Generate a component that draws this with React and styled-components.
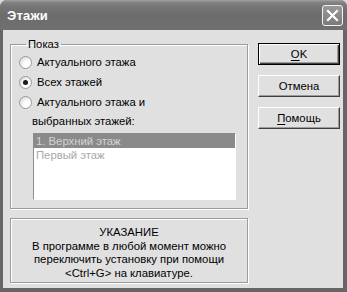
import React from 'react';
import styled, {createGlobalStyle} from 'styled-components';

const GlobalStyle = createGlobalStyle`
    html, body {
        margin: 0;
        padding: 0;
        background: #d9d9d9;
    }
    body {
        font-family: "Liberation Sans", Arial, sans-serif;
        font-size: 11.3px;
        color: #000;
    }
`;

const Window = styled.div`
    width: 347px;
    height: 292px;
    display: flex;
    flex-direction: column;
    background: #666;
    border-radius: 7px 7px 0 0;
    overflow: hidden;
`;

const TitleBar = styled.div`
    height: 30px;
    flex: none;
    display: flex;
    align-items: center;
    justify-content: space-between;
    padding: 0 4px 0 7px;
    box-sizing: border-box;
    background: linear-gradient(#a4a4a4 0, #858585 2px, #767676 6px, #6c6c6c 50%, #707070 100%);
`;

const Title = styled.span`
    color: #fff;
    font-weight: bold;
    font-size: 13px;
    letter-spacing: 0.2px;
`;

const CloseButton = styled.div`
    width: 21px;
    height: 21px;
    box-sizing: border-box;
    border: 1px solid #f2f2f2;
    border-radius: 3px;
    background: linear-gradient(#9a9a9a, #7a7a7a);
    display: flex;
    align-items: center;
    justify-content: center;
`;

const Client = styled.div`
    flex: 1;
    margin: 0 4px 4px 3px;
    background: #e0e0e0;
    display: flex;
    gap: 10px;
    padding: 7px 3px 5px 7px;
    box-sizing: border-box;
`;

const LeftCol = styled.div`
    width: 239px;
    display: flex;
    flex-direction: column;
    gap: 9px;
`;

const Group = styled.fieldset`
    margin: 0;
    height: 172px;
    box-sizing: border-box;
    padding: 1px 0 0 8px;
    border: 1px solid #9c9c9c;
    box-shadow: inset 1px 1px #fff, 1px 1px #fff;
`;

const Legend = styled.legend`
    margin-left: 7px;
    padding: 0 2px;
    line-height: 14px;
`;

const RadioRow = styled.div`
    display: flex;
    align-items: center;
    height: 20px;
    gap: 5px;
`;

const Radio = styled.span`
    width: 13px;
    height: 13px;
    box-sizing: border-box;
    border-radius: 50%;
    border: 1px solid #9a9a9a;
    background: radial-gradient(circle at 70% 70%, #fff 30%, #e4e4e4 70%, #cfcfcf 100%);
    display: flex;
    align-items: center;
    justify-content: center;
    &::after {
        content: '';
        width: 5px;
        height: 5px;
        border-radius: 50%;
        background: ${p => (p.$checked ? '#1a1a1a' : 'transparent')};
    }
`;

const WrapLine = styled.div`
    padding-left: 13px;
    line-height: 16px;
    margin-top: 1px;
`;

const ListBox = styled.div`
    margin: 4px 0 0 14px;
    width: 203px;
    height: 67px;
    box-sizing: border-box;
    background: #fff;
    border: 1px solid;
    border-color: #8c8c8c #fff #fff #8c8c8c;
`;

const ListItem = styled.div`
    height: 14px;
    line-height: 14px;
    padding-left: 2px;
    background: ${p => (p.$selected ? '#8a8a8a' : 'transparent')};
    color: ${p => (p.$selected ? '#d4d4d4' : '#a8a8a8')};
`;

const Hint = styled.div`
    height: 65px;
    box-sizing: border-box;
    border: 1px solid #9c9c9c;
    box-shadow: inset 1px 1px #fff, 1px 1px #fff;
    text-align: center;
    line-height: 13.5px;
    padding-top: 7px;
`;

const RightCol = styled.div`
    display: flex;
    flex-direction: column;
    gap: 10px;
    padding-top: 6px;
`;

const Button = styled.div`
    width: 82px;
    height: 22px;
    box-sizing: border-box;
    display: flex;
    align-items: center;
    justify-content: center;
    background: #e0e0e0;
    border: 1px solid;
    border-color: ${p => (p.$default ? '#000' : '#fff #404040 #404040 #fff')};
    box-shadow: ${p => (p.$default
        ? 'inset 1px 1px #fff, inset -1px -1px #404040, inset -2px -2px #9c9c9c'
        : 'inset -1px -1px #9c9c9c')};
    & u {
        text-decoration: underline;
        text-underline-offset: 2px;
    }
`;

function App() {
    return (
        <>
            <GlobalStyle />
            <Window>
                <TitleBar>
                    <Title>Этажи</Title>
                    <CloseButton>
                        <svg width="13" height="13" viewBox="0 0 13 13">
                            <path d="M2 2 L11 11 M11 2 L2 11" stroke="#fff" strokeWidth="2.2" strokeLinecap="square" />
                        </svg>
                    </CloseButton>
                </TitleBar>
                <Client>
                    <LeftCol>
                        <Group>
                            <Legend>Показ</Legend>
                            <RadioRow><Radio />Актуального этажа</RadioRow>
                            <RadioRow><Radio $checked />Всех этажей</RadioRow>
                            <RadioRow><Radio />Актуального этажа и</RadioRow>
                            <WrapLine>выбранных этажей:</WrapLine>
                            <ListBox>
                                <ListItem $selected>1. Верхний этаж</ListItem>
                                <ListItem>Первый этаж</ListItem>
                            </ListBox>
                        </Group>
                        <Hint>
                            УКАЗАНИЕ<br />
                            В программе в любой момент можно<br />
                            переключить установку при помощи<br />
                            &lt;Ctrl+G&gt; на клавиатуре.
                        </Hint>
                    </LeftCol>
                    <RightCol>
                        <Button $default><span><u>O</u>K</span></Button>
                        <Button>Отмена</Button>
                        <Button><span><u>П</u>омощь</span></Button>
                    </RightCol>
                </Client>
            </Window>
        </>
    );
}

export default App;
